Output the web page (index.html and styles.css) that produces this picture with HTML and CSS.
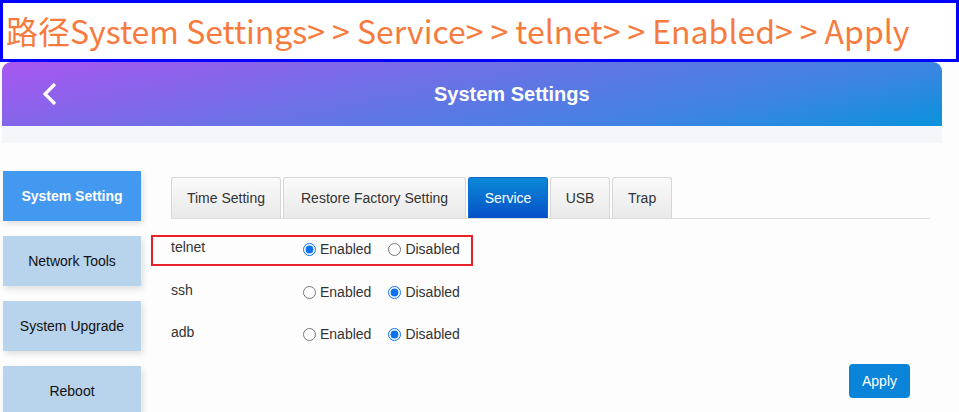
FILE: index.html
```html
<!DOCTYPE html>
<html>
<head>
<meta charset="utf-8">
<link rel="stylesheet" href="styles.css">
</head>
<body>
<div class="path">路径System Settings<span class="gt">&gt;&gt;</span>Service<span class="gt">&gt;&gt;</span>telnet<span class="gt">&gt;&gt;</span>Enabled<span class="gt">&gt;&gt;</span>Apply</div>
<div class="header">
  <svg class="back" width="16" height="24" viewBox="0 0 16 24"><path d="M13 2 L3 12 L13 22" fill="none" stroke="#fff" stroke-width="3.2"/></svg>
  <div class="title">System Settings</div>
</div>
<div class="band"></div>
<div class="main">
  <div class="side">
    <div class="nav active">System Setting</div>
    <div class="nav">Network Tools</div>
    <div class="nav">System Upgrade</div>
    <div class="nav">Reboot</div>
  </div>
  <div class="content">
    <div class="tabs">
      <div class="tab">Time Setting</div>
      <div class="tab">Restore Factory Setting</div>
      <div class="tab on">Service</div>
      <div class="tab sm">USB</div>
      <div class="tab sm">Trap</div>
    </div>
    <div class="row hl">
      <span class="lbl">telnet</span>
      <label class="opt"><input type="radio" name="t" checked>Enabled</label>
      <label class="opt"><input type="radio" name="t">Disabled</label>
    </div>
    <div class="row">
      <span class="lbl">ssh</span>
      <label class="opt"><input type="radio" name="s">Enabled</label>
      <label class="opt"><input type="radio" name="s" checked>Disabled</label>
    </div>
    <div class="row">
      <span class="lbl">adb</span>
      <label class="opt"><input type="radio" name="a">Enabled</label>
      <label class="opt"><input type="radio" name="a" checked>Disabled</label>
    </div>
    <div class="actions"><button class="apply">Apply</button></div>
  </div>
</div>
</body>
</html>
```
FILE: styles.css
```css
html, body { margin: 0; padding: 0; background: #fdfdfd; overflow: hidden; }
body { font-family: "Liberation Sans", Arial, sans-serif; font-size: 14px; color: #333; width: 959px; height: 412px; }

.path {
  box-sizing: border-box;
  height: 62px;
  border: 3px solid #0000ff;
  background: #fff;
  color: #f77b3e;
  font-family: "Noto Sans CJK SC", sans-serif;
  font-size: 32px;
  line-height: 54px;
  padding-left: 3px;
  white-space: nowrap;
  overflow: hidden;
}
.gt { letter-spacing: 7px; }

.header {
  margin: 0 17px 0 2px;
  height: 64px;
  border-radius: 9px 9px 0 0;
  background: linear-gradient(168deg, #a956f1 0%, #6e70e6 40%, #3f84e2 75%, #0a92dc 100%);
  display: flex;
  align-items: center;
}
.back { margin-left: 40px; }
.title { color: #fff; font-weight: bold; font-size: 20px; margin-left: 376px; }

.band { margin: 0 17px 0 2px; height: 17px; background: #f3f6fb; }

.main { display: flex; padding-top: 28px; }
.side { width: 138px; margin-left: 3px; display: flex; flex-direction: column; gap: 15px; }
.nav {
  height: 50px;
  background: #b8d3ec;
  color: #111;
  font-size: 14px;
  display: flex; align-items: center; justify-content: center;
  box-shadow: 2px 3px 6px rgba(0,0,0,0.12);
}
.nav.active { background: #4299ef; color: #fff; font-weight: bold; }

.content { margin-left: 30px; width: 759px; padding-top: 6px; }
.tabs { display: flex; gap: 2px; border-bottom: 1px solid #ddd; height: 41px; }
.tab {
  box-sizing: border-box;
  height: 41px;
  padding: 0 17px;
  border: 1px solid #d6d6d6;
  border-bottom: none;
  border-radius: 3px 3px 0 0;
  background: linear-gradient(#fafafa, #e9e9e9);
  color: #333;
  display: flex; align-items: center; justify-content: center;
}
.tab:first-child { width: 110px; padding: 0; }
.tab.on { background: linear-gradient(#0a8ad6, #0650c8); color: #fff; border-color: #0a6ad0; width: 80px; padding: 0; }
.tab.sm { width: 60px; padding: 0; }

.row { display: flex; align-items: center; height: 30px; margin-top: 12px; position: relative; }
.row.hl { margin-top: 16px; }
.row.hl::before {
  content: ""; position: absolute; left: -20px; top: 0; width: 322px; height: 31px;
  border: 2px solid #e8202a; box-sizing: border-box;
}
.row.hl .lbl { top: -3px; }
.row.hl .opt { position: relative; top: -1px; }
.lbl { width: 129px; color: #333; position: relative; top: -2px; }
.opt { display: flex; align-items: center; margin-right: 14px; color: #333; }
.opt input { margin: 0 4px 0 3px; width: 13px; height: 13px; accent-color: #0a72f0; }

.actions { display: flex; justify-content: flex-end; padding-right: 20px; margin-top: 15px; }
.apply {
  width: 61px; height: 34px; border: none; border-radius: 4px;
  background: #0a84d8; color: #fff; font-family: "Liberation Sans", Arial, sans-serif; font-size: 14px;
}
```
